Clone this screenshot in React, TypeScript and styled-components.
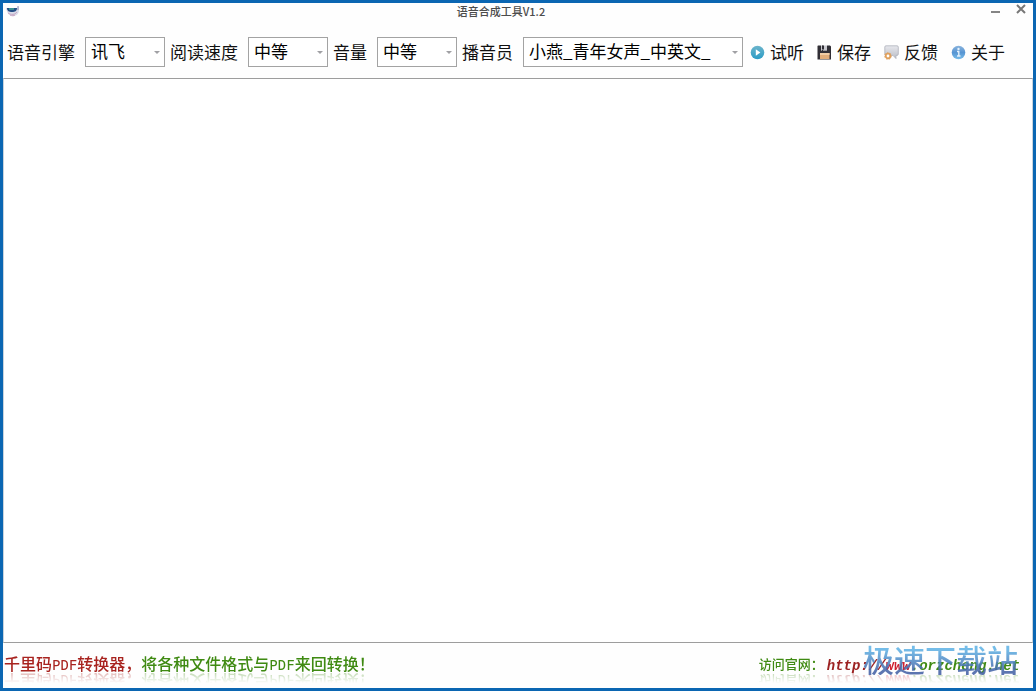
import React from "react";
import styled, { createGlobalStyle } from "styled-components";

const GlobalStyle = createGlobalStyle`
  * { box-sizing: border-box; }
  body {
    margin: 0;
    background: #fff;
    font-family: "Noto Sans CJK SC", "Liberation Sans", sans-serif;
  }
`;

const Window = styled.div`
  display: flex;
  flex-direction: column;
  min-height: 100vh;
  border: 3px solid #0b66b2;
  background: #fefefe;
`;

const TitleBar = styled.header`
  display: flex;
  align-items: flex-start;
  height: 23px;
  padding: 0 3px;
`;

const Title = styled.h1`
  flex: 1;
  margin: 0;
  padding-left: 4px;
  text-align: center;
  font-size: 11px;
  line-height: 16px;
  font-weight: 500;
  color: #4c4c4c;
`;

const WindowButton = styled.button`
  display: flex;
  width: 26px;
  height: 16px;
  padding: 0;
  border: 0;
  background: none;
  justify-content: flex-end;
`;

const Toolbar = styled.div`
  display: flex;
  align-items: center;
  height: 52px;
  padding: 0 4px;
  gap: 5px;
  font-size: 17px;
  line-height: 24px;
  color: #111;
  white-space: nowrap;
`;

const Field = styled.label`
  display: flex;
  align-items: center;
  gap: 10px;
`;

const SelectBox = styled.span<{ $wide?: boolean }>`
  position: relative;
  display: block;
  width: ${(p) => (p.$wide ? 220 : 80)}px;

  &::after {
    content: "";
    position: absolute;
    right: 5px;
    top: 14px;
    border: 3px solid transparent;
    border-top-color: #a0a0a4;
    border-bottom: 0;
    pointer-events: none;
  }
`;

const Select = styled.select`
  appearance: none;
  display: block;
  width: 100%;
  height: 30px;
  padding: 0 5px 2px;
  border: 1px solid #a3a3a3;
  border-radius: 0;
  background: #fff;
  font: inherit;
  color: #000;
`;

const Actions = styled.div`
  display: flex;
  gap: 13px;
  margin-left: 2px;
`;

const Action = styled.button`
  display: flex;
  align-items: center;
  gap: 5px;
  padding: 0;
  border: 0;
  background: none;
  font: inherit;
  color: inherit;
`;

const Editor = styled.textarea`
  flex: 1;
  display: block;
  width: 100%;
  border: 1px solid #9d9d9d;
  border-left-color: #c9d3dc;
  border-right-color: #c9d3dc;
  padding: 6px;
  resize: none;
  outline: none;
  background: #fff;
  font: inherit;
  font-size: 17px;
`;

const Footer = styled.footer`
  position: relative;
  display: flex;
  justify-content: space-between;
  align-items: flex-start;
  height: 45px;
  padding: 10px 13px 0 1px;
  overflow: hidden;
  white-space: nowrap;
`;

const reflection = `
  -webkit-box-reflect: below -5px linear-gradient(transparent 40%, rgba(0, 0, 0, 0.4));
`;

const Promo = styled.a`
  font-size: 16px;
  line-height: 20px;
  font-weight: 500;
  text-decoration: none;
  color: #3f8a12;
  ${reflection}
`;

const Product = styled.span`
  color: #a8231f;
`;

const Latin = styled.span`
  font-family: "DejaVu Sans Mono", monospace;
  font-size: 14px;
`;

const Site = styled.a`
  display: flex;
  align-items: center;
  gap: 3px;
  font-size: 13px;
  line-height: 20px;
  font-weight: 500;
  text-decoration: none;
  color: #3f8a12;
  ${reflection}
`;

const Address = styled.span`
  padding-top: 4px;
  font-family: "Liberation Mono", monospace;
  font-size: 14px;
  line-height: 18px;
  font-style: italic;
  font-weight: 700;
`;

const Scheme = styled.span`
  color: #9c2222;
`;

const Host = styled.span`
  color: #cf2030;
`;

const Watermark = styled.span`
  position: absolute;
  right: 15px;
  top: 0;
  font-size: 31px;
  line-height: 32px;
  font-weight: 500;
  color: transparent;
  background: linear-gradient(#62b4e6 20%, #4663a6 90%);
  background-clip: text;
  opacity: 0.88;
  pointer-events: none;
`;

const AppIcon = () => (
  <svg width="14" height="16" viewBox="0 0 14 16" aria-hidden="true">
    <path d="M0 5h11l2-2v4c0 3-2 6-6 6S1 10 0 5z" fill="#d9dcea" />
    <path d="M1 5h10c0 3-2 4-5 4S1 8 1 5z" fill="#244f86" />
    <path d="M3 6h5" stroke="#43a997" strokeWidth="1.5" />
    <path d="M2 10c3 2 7 2 9-1M4 12c2 1 4 1 5 0" stroke="#c8a6c3" fill="none" />
    <path d="M12 3v4" stroke="#8d94b8" />
  </svg>
);

const PlayIcon = () => (
  <svg width="15" height="15" viewBox="0 0 15 15" aria-hidden="true">
    <defs>
      <linearGradient id="play" x2="0" y2="1">
        <stop stopColor="#6cb4cb" />
        <stop offset="1" stopColor="#2a9cc6" />
      </linearGradient>
    </defs>
    <circle cx="7.5" cy="7.5" r="6.8" fill="url(#play)" />
    <path d="M5.8 4.3v6.4l4.6-3.2z" fill="#fff" />
  </svg>
);

const SaveIcon = () => (
  <svg width="15" height="15" viewBox="0 0 15 15" aria-hidden="true">
    <path d="M1 .5h3v5h1V.5h1v5h4V.5h3l1 1v13H.5V1z" fill="#302e35" />
    <path d="M4 .5h6v4.5H4z" fill="#c9c9cf" />
    <path d="M5 .5h2v4H5z" fill="#302e35" />
    <path d="M3 8h9.5v6H3z" fill="#e2ad79" />
    <path d="M3 8h9.5v2H3z" fill="#f1cda5" />
  </svg>
);

const FeedbackIcon = () => (
  <svg width="15" height="15" viewBox="0 0 15 15" aria-hidden="true">
    <defs>
      <linearGradient id="bubble" x2="0" y2="1">
        <stop stopColor="#e7e8ed" />
        <stop offset="1" stopColor="#b9bcc5" />
      </linearGradient>
    </defs>
    <path d="M2 .8h11q1.3 0 1.3 1.3v7q0 1.300-1.3 1.300h-1v3.200l-3-3.200H2Q.8 10.400.8 9V2Q.8.8 2 .8z" fill="url(#bubble)" stroke="#aeb1bb" strokeWidth=".8" />
    <circle cx="4" cy="11" r="2.3" fill="#fff" stroke="#e0a05c" strokeWidth="1.8" />
    <circle cx="4" cy="11" r="3.4" fill="none" stroke="#dca163" strokeWidth=".8" strokeDasharray="1.5 1.4" />
  </svg>
);

const InfoIcon = () => (
  <svg width="15" height="15" viewBox="0 0 15 15" aria-hidden="true">
    <defs>
      <linearGradient id="info" x2="0" y2="1">
        <stop stopColor="#8bb4dd" />
        <stop offset=".5" stopColor="#5795d3" />
        <stop offset="1" stopColor="#79bdea" />
      </linearGradient>
    </defs>
    <circle cx="7.5" cy="7.5" r="6.8" fill="url(#info)" />
    <circle cx="7.5" cy="4" r="1.2" fill="#e4f1fb" />
    <path d="M6 6.5h1.800v4M6 11h3.500" stroke="#e4f1fb" strokeWidth="1.4" fill="none" />
  </svg>
);

type PickerProps = { label: string; options: string[]; wide?: boolean };

const Picker = ({ label, options, wide }: PickerProps) => (
  <Field>
    {label}
    <SelectBox $wide={wide}>
      <Select defaultValue={options[0]}>
        {options.map((o) => (
          <option key={o}>{o}</option>
        ))}
      </Select>
    </SelectBox>
  </Field>
);

export default function App() {
  return (
    <Window>
      <GlobalStyle />
      <TitleBar>
        <AppIcon />
        <Title>语音合成工具V1.2</Title>
        <WindowButton type="button" aria-label="最小化">
          <svg width="26" height="16" viewBox="0 0 26 16">
            <path d="M13 9h9" stroke="#858585" strokeWidth="2" />
          </svg>
        </WindowButton>
        <WindowButton type="button" aria-label="关闭">
          <svg width="26" height="16" viewBox="0 0 26 16">
            <path d="M13 2l8 8M21 2l-8 8" stroke="#777" strokeWidth="2" />
          </svg>
        </WindowButton>
      </TitleBar>
      <Toolbar>
        <Picker label="语音引擎" options={["讯飞"]} />
        <Picker label="阅读速度" options={["中等"]} />
        <Picker label="音量" options={["中等"]} />
        <Picker label="播音员" options={["小燕_青年女声_中英文_"]} wide />
        <Actions>
          <Action type="button"><PlayIcon />试听</Action>
          <Action type="button"><SaveIcon />保存</Action>
          <Action type="button"><FeedbackIcon />反馈</Action>
          <Action type="button"><InfoIcon />关于</Action>
        </Actions>
      </Toolbar>
      <Editor aria-label="朗读文本" />
      <Footer>
        <Promo href="#pdf">
          <Product>千里码<Latin>PDF</Latin>转换器，</Product>
          将各种文件格式与<Latin>PDF</Latin>来回转换！
        </Promo>
        <Site href="#site">
          访问官网：
          <Address>
            <Scheme>http://</Scheme>
            <Host>www</Host>.orzcheng.net
          </Address>
        </Site>
        <Watermark>极速下载站</Watermark>
      </Footer>
    </Window>
  );
}
